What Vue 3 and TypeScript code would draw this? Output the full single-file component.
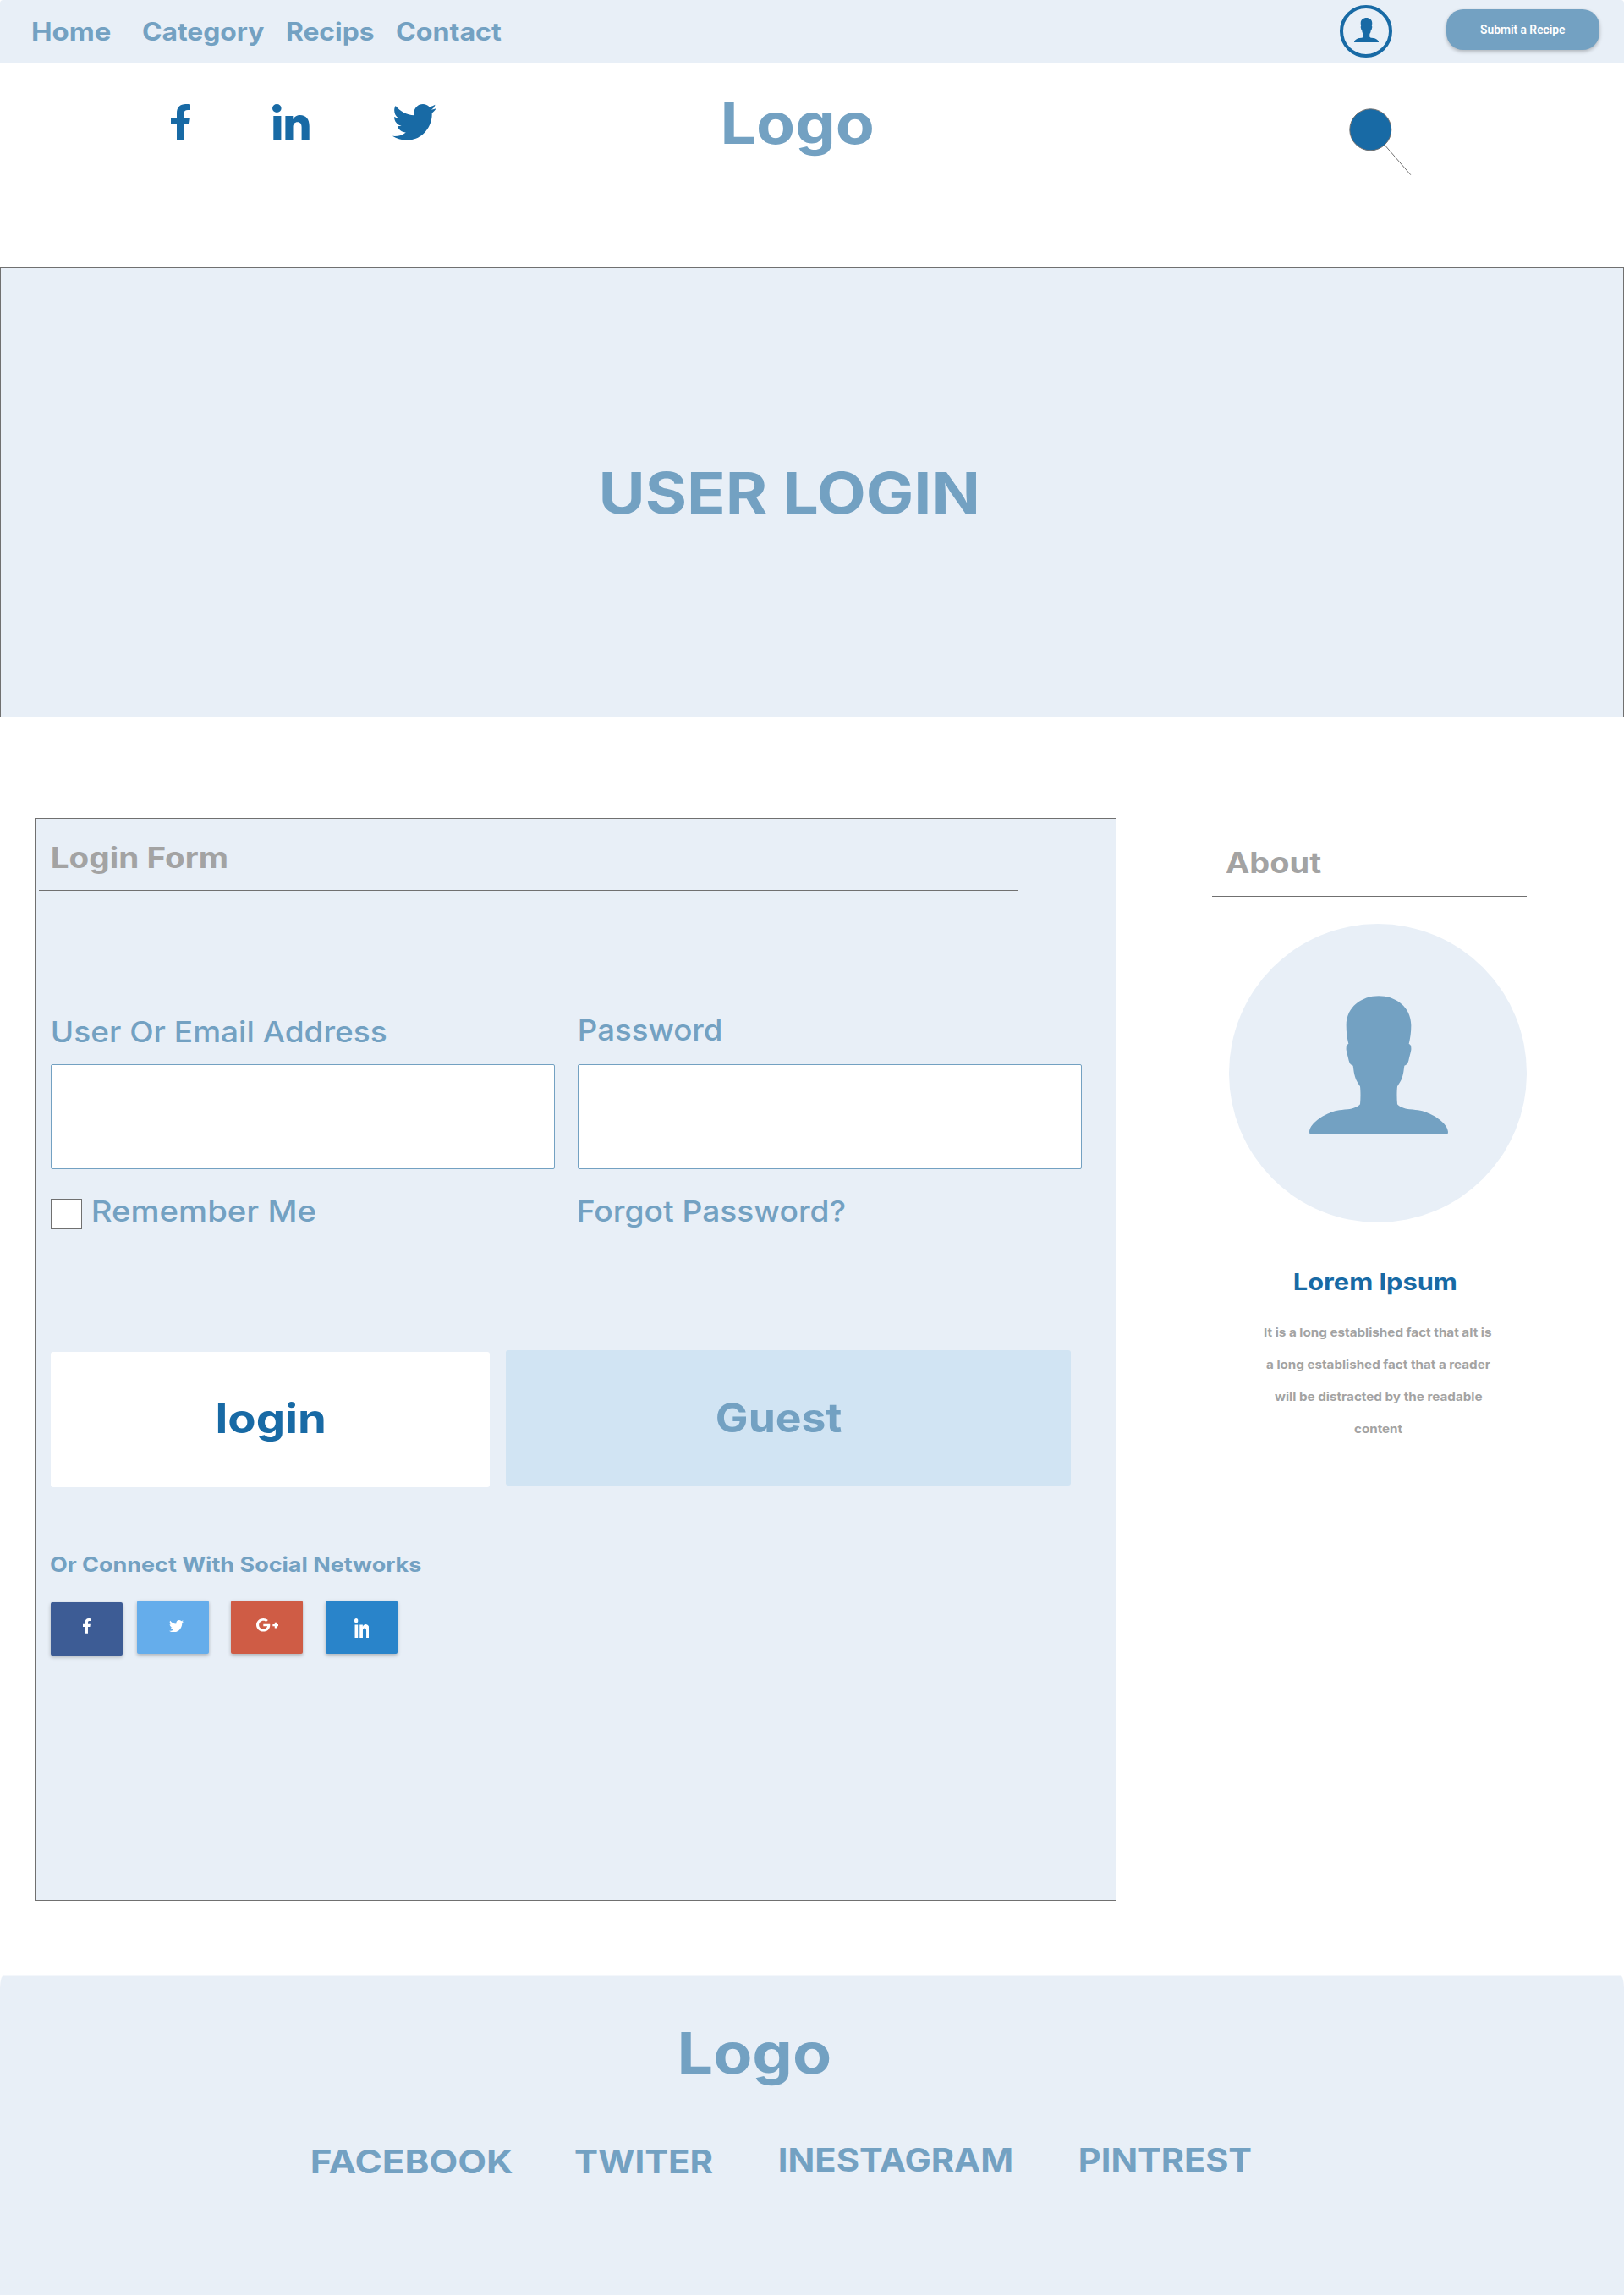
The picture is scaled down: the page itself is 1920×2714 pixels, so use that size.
<script setup lang="ts">
import type { Directive } from 'vue'

interface TextItem {
  label: string
  width: number
}

// Stretches a single line of text so that its visible ink fills the given width.
const vFit: Directive<HTMLElement, number> = {
  mounted(el, { value }) {
    const style = getComputedStyle(el)
    const ctx = document.createElement('canvas').getContext('2d')
    if (!ctx) return
    ctx.font = `${style.fontWeight} ${style.fontSize} ${style.fontFamily}`
    const m = ctx.measureText(el.textContent ?? '')
    const ratio = value / (m.actualBoundingBoxLeft + m.actualBoundingBoxRight)
    el.style.width = `${value}px`
    el.style.transform = `translateX(${m.actualBoundingBoxLeft * ratio}px) scaleX(${ratio})`
  },
}

const nav: TextItem[] = [
  { label: 'Home', width: 92.6 },
  { label: 'Category', width: 143.6 },
  { label: 'Recips', width: 103 },
  { label: 'Contact', width: 124 },
]

const aboutLines: TextItem[] = [
  { label: 'It is a long established fact that aIt is', width: 269.8 },
  { label: 'a long established fact that a reader', width: 265.3 },
  { label: 'will be distracted by the readable', width: 245.3 },
  { label: 'content', width: 57 },
]

const footerLinks: TextItem[] = [
  { label: 'FACEBOOK', width: 236.8 },
  { label: 'TWITER', width: 162.8 },
  { label: 'INESTAGRAM', width: 274 },
  { label: 'PINTREST', width: 202.3 },
]

const facebook =
  'M23.3.4C21.5.1 20 0 17.5 0 11 0 7 4 7 10.5V16.3H0V24H7V42.7H15.5V24H21.8L22.9 16.3H15.5V11.3C15.5 8.5 17 7.1 20 7.1H23.3Z'
const linkedin =
  'M5.3 0a5.3 5 0 1 1 0 10a5.3 5 0 1 1 0-10ZM1.3 14H10.4V42.7H1.3ZM15.4 14H24.3V18C26.3 14.6 29.3 13 32.7 13C40 13 43.7 18 43.7 26V42.7H34.6V27.5C34.6 23.4 33 21.2 29.8 21.2C26.5 21.2 24.5 23.5 24.5 27V42.7H15.4Z'
const twitter =
  'M459.37 151.716c.325 4.548.325 9.097.325 13.645 0 138.72-105.583 298.558-298.558 298.558-59.452 0-114.68-17.219-161.137-47.106 8.447.974 16.568 1.299 25.34 1.299 49.055 0 94.213-16.568 130.274-44.832-46.132-.975-84.792-31.188-98.112-72.772 6.498.974 12.995 1.624 19.818 1.624 9.421 0 18.843-1.3 27.614-3.573-48.081-9.747-84.143-51.98-84.143-102.985v-1.299c13.969 7.797 30.214 12.67 47.431 13.319-28.264-18.843-46.781-51.005-46.781-87.391 0-19.492 5.197-37.36 14.294-52.954 51.655 63.675 129.3 105.258 216.365 109.807-1.624-7.797-2.599-15.918-2.599-24.04 0-57.828 46.782-104.934 104.934-104.934 30.213 0 57.502 12.67 76.67 33.137 23.715-4.548 46.456-13.32 66.599-25.34-7.798 24.366-24.366 44.833-46.132 57.827 21.117-2.273 41.584-8.122 60.426-16.243-14.292 20.791-32.161 39.308-52.628 54.253z'
const googlePlus =
  'M386.061 228.496c1.834 9.692 3.143 19.384 3.143 31.956C389.204 370.205 315.599 448 204.8 448c-106.084 0-192-85.915-192-192s85.916-192 192-192c51.864 0 95.083 18.859 128.611 50.292l-52.126 50.03c-14.145-13.621-39.028-29.599-76.485-29.599-65.484 0-118.92 54.221-118.92 121.277 0 67.056 53.436 121.277 118.92 121.277 75.961 0 104.513-54.745 108.965-82.773H204.8v-66.009h181.261zm185.406 6.437V179.2h-56.001v55.733h-55.733v56.001h55.733v55.733h56.001v-55.733H627.2v-56.001h-55.733z'
const person =
  'M246 1C306 1 361 40 361 105C361 130 358 150 353 171C359 172 362 178 361 192C359 205 355 215 352 230C349 242 344 246 337 248C334 270 333 280 327 296C322 306 316 315 312 322C310 340 310 365 312 385C318 393 336 401 356 403C386 406 404 408 421 416C451 428 491 455 492 484Q492 493 483 493H9Q0 493 0 484C1 455 41 428 71 416C88 408 106 406 136 403C156 401 174 393 180 385C182 365 182 340 180 322C176 315 170 306 165 296C159 280 158 270 155 248C148 246 143 242 140 230C137 215 133 205 131 192C130 178 133 172 139 171C134 150 131 130 131 105C131 40 186 1 246 1Z'
</script>

<template>
  <div class="page">
    <header class="topbar">
      <nav class="nav">
        <a v-for="item in nav" :key="item.label" v-fit="item.width" class="txt nav-link">{{ item.label }}</a>
      </nav>
      <div class="avatar">
        <svg width="29" height="29" viewBox="0 0 492 493" preserveAspectRatio="none"><path :d="person" /></svg>
      </div>
      <button class="submit"><span v-fit="101" class="txt">Submit a Recipe</span></button>
    </header>

    <section class="masthead">
      <div class="socials">
        <svg class="fb" width="23.3" height="42.7" viewBox="0 0 23.3 42.7"><path :d="facebook" /></svg>
        <svg class="li" width="43.8" height="42.7" viewBox="0 0 43.8 42.7"><path :d="linkedin" /></svg>
        <svg class="tw" width="52" height="42.7" viewBox="0 48 512 416" preserveAspectRatio="none"><path :d="twitter" /></svg>
      </div>
      <div v-fit="175.2" class="txt logo">Logo</div>
      <svg class="search" width="74" height="81" viewBox="0 0 74 81">
        <circle cx="25.3" cy="25.3" r="24.5" fill="#186aa5" stroke="#707070" />
        <path d="M41.8 43 72.8 78.7" fill="none" stroke="#707070" />
      </svg>
    </section>

    <section class="hero">
      <h1 v-fit="442" class="txt hero-title">USER LOGIN</h1>
    </section>

    <main class="content">
      <form class="form" @submit.prevent>
        <h2 v-fit="206" class="txt heading">Login Form</h2>
        <div class="form-rule"></div>
        <div class="fields">
          <label class="field">
            <span v-fit="394.5" class="txt label user">User Or Email Address</span>
            <input type="text" class="input" />
          </label>
          <label class="field">
            <span v-fit="167.5" class="txt label pass">Password</span>
            <input type="password" class="input" />
          </label>
        </div>
        <div class="options">
          <label class="remember">
            <input type="checkbox" class="check" />
            <span v-fit="263" class="txt label">Remember Me</span>
          </label>
          <a v-fit="315.3" class="txt label">Forgot Password?</a>
        </div>
        <div class="actions">
          <button class="btn login"><span v-fit="124.6" class="txt">login</span></button>
          <button class="btn guest"><span v-fit="146.8" class="txt">Guest</span></button>
        </div>
        <p v-fit="437.8" class="txt connect">Or Connect With Social Networks</p>
        <div class="networks">
          <a class="net net-fb">
            <svg width="9" height="17.7" viewBox="0 0 23.3 42.7" preserveAspectRatio="none"><path :d="facebook" /></svg>
          </a>
          <a class="net net-tw">
            <svg width="17" height="14.4" viewBox="0 48 512 416" preserveAspectRatio="none"><path :d="twitter" /></svg>
          </a>
          <a class="net net-gp">
            <svg width="26.6" height="15.6" viewBox="12.8 64 614.4 384" preserveAspectRatio="none"><path :d="googlePlus" /></svg>
          </a>
          <a class="net net-li">
            <svg width="17.8" height="23" viewBox="0 0 43.8 42.7" preserveAspectRatio="none"><path :d="linkedin" /></svg>
          </a>
        </div>
      </form>

      <aside class="about">
        <h2 v-fit="112.7" class="txt heading">About</h2>
        <div class="about-rule"></div>
        <div class="portrait">
          <svg width="164" height="164.3" viewBox="0 0 492 493" preserveAspectRatio="none"><path :d="person" /></svg>
        </div>
        <h3 v-fit="191" class="txt name">Lorem Ipsum</h3>
        <div class="bio">
          <div v-for="line in aboutLines" :key="line.label" v-fit="line.width" class="txt bio-line">{{ line.label }}</div>
        </div>
      </aside>
    </main>

    <footer class="footer">
      <div v-fit="175.6" class="txt logo">Logo</div>
      <div class="footer-links">
        <a v-for="link in footerLinks" :key="link.label" v-fit="link.width" class="txt footer-link">{{ link.label }}</a>
      </div>
    </footer>
  </div>
</template>

<style>
body {
  margin: 0;
  background: #fff;
}
</style>

<style scoped>
.page {
  width: 1920px;
  height: 2714px;
  display: flex;
  flex-direction: column;
  background: #fff;
  color: #73a1c2;
  font-family: Inter, 'Noto Sans', sans-serif;
  overflow: hidden;
}
.page *,
.page {
  box-sizing: border-box;
}
svg {
  display: block;
  flex: none;
  fill: currentColor;
}
.txt {
  display: block;
  flex: none;
  margin: 0;
  white-space: nowrap;
  text-align: left;
  transform-origin: 0 50%;
}
button {
  border: 0;
  padding: 0;
  font-family: inherit;
}

.topbar {
  height: 75px;
  flex: none;
  display: flex;
  align-items: flex-start;
  background: #e8eff7;
  border-radius: 4px 4px 0 0;
}
.nav {
  display: flex;
  padding: 22px 0 0 38.2px;
  width: 1584px;
}
.nav-link {
  font-size: 29.5px;
  font-weight: 700;
  line-height: 30px;
}
.nav-link:nth-child(1) {
  margin-right: 37.8px;
}
.nav-link:nth-child(2) {
  margin-right: 26.8px;
}
.nav-link:nth-child(3) {
  margin-right: 26.6px;
}
.avatar {
  width: 62px;
  height: 62px;
  margin-top: 6px;
  border: 4px solid #186aa5;
  border-radius: 50%;
  color: #186aa5;
  display: flex;
  justify-content: center;
  padding-top: 11px;
}
.submit {
  width: 181px;
  height: 48px;
  margin: 11px 0 0 64px;
  padding: 0 0 0 40.3px;
  border-radius: 20px;
  background: #73a1c2;
  color: #fff;
  font: 600 14px/16px Roboto, sans-serif;
  box-shadow: 0 2px 4px rgba(0, 0, 0, 0.25);
}

.masthead {
  height: 241px;
  flex: none;
  display: flex;
  align-items: flex-start;
}
.socials {
  display: flex;
  width: 855.9px;
  padding: 48px 0 0 202px;
  color: #186aa5;
}
.li {
  margin-left: 97.1px;
}
.tw {
  margin-left: 97.8px;
}
.logo {
  font-size: 67.4px;
  font-weight: 700;
  line-height: 68px;
}
.masthead .logo {
  margin-top: 36.5px;
}
.search {
  margin: 53px 0 0 563.9px;
}

.hero {
  height: 532px;
  flex: none;
  border: 1px solid #707070;
  background: #e8eff7;
  padding: 231.5px 0 0 711px;
}
.hero-title {
  font-size: 67.4px;
  font-weight: 700;
  line-height: 68px;
}

.content {
  flex: none;
  display: flex;
  align-items: flex-start;
  height: 1487px;
  padding: 118px 0 0 41px;
}
.form {
  width: 1279px;
  height: 1280px;
  flex: none;
  margin-top: 1px;
  border: 1px solid #707070;
  background: #e8eff7;
  padding: 28.5px 0 0 18px;
}
.heading {
  font-size: 33.7px;
  font-weight: 700;
  line-height: 34px;
  color: #a3a3a3;
}
.form .heading {
  margin-left: 2.3px;
}
.form-rule {
  width: 1157px;
  margin: 21.5px 0 0 -14px;
  border-top: 1px solid #707070;
}
.fields {
  display: flex;
  align-items: flex-end;
  gap: 27px;
  margin-top: 147.75px;
}
.field {
  width: 596px;
  flex: none;
}
.label {
  font-size: 33.7px;
  font-weight: 450;
  line-height: 34px;
}
.user {
  margin: 0 0 21.25px 2.3px;
}
.pass {
  margin: 0 0 23.25px 2.3px;
}
.input {
  display: block;
  width: 596px;
  height: 124px;
  margin: 0;
  border: 1px solid #73a1c2;
  border-radius: 2px;
  background: #fff;
}
.options {
  display: flex;
  height: 38.5px;
  margin-top: 32.5px;
}
.remember {
  display: flex;
  width: 623.7px;
}
.check {
  appearance: none;
  width: 37px;
  height: 36px;
  margin: 2.5px 13.4px 0 0;
  border: 1px solid #707070;
  background: #fff;
}
.actions {
  display: flex;
  align-items: flex-start;
  gap: 19px;
  margin-top: 143px;
}
.btn {
  height: 160px;
  border-radius: 3px;
  font-size: 48.1px;
  font-weight: 700;
  line-height: 48px;
}
.login {
  width: 519px;
  margin-top: 2px;
  padding: 0 0 2px 197.8px;
  background: #fff;
  color: #186aa5;
}
.guest {
  width: 668px;
  padding: 0 0 1px 249.5px;
  background: #d1e4f3;
  color: #73a1c2;
}
.connect {
  margin-top: 80px;
  font-size: 24px;
  font-weight: 700;
  line-height: 24px;
}
.networks {
  display: flex;
  align-items: flex-start;
  margin-top: 30px;
}
.net {
  width: 85px;
  height: 63px;
  border-radius: 2px;
  color: #fff;
  box-shadow: 0 2px 4px rgba(0, 0, 0, 0.25);
}
.net-fb {
  margin-top: 2px;
  padding: 19px 0 0 38px;
  background: #3d5c95;
}
.net-tw {
  margin-left: 17px;
  padding: 22.6px 0 0 37.6px;
  background: #65adeb;
}
.net-gp {
  margin-left: 26px;
  padding: 21px 0 0 29.5px;
  background: #cf5c45;
}
.net-li {
  margin-left: 27px;
  padding: 21px 0 0 33.7px;
  background: #2984ca;
}

.about {
  width: 372px;
  margin-left: 113px;
  padding-top: 37px;
}
.about .heading {
  margin-left: 16.3px;
}
.about-rule {
  margin-top: 22px;
  border-top: 1px solid #707070;
}
.portrait {
  width: 352px;
  height: 353px;
  margin: 32px 0 0 20px;
  border-radius: 50%;
  background: #e8eff7;
  padding: 84.7px 0 0 95px;
}
.name {
  margin: 57px 0 0 97px;
  font-size: 27px;
  font-weight: 700;
  line-height: 28px;
  color: #186aa5;
}
.bio {
  display: flex;
  flex-direction: column;
  align-items: center;
  width: 269.3px;
  margin: 26px 0 0 61.6px;
}
.bio-line {
  font-size: 13.8px;
  font-weight: 700;
  line-height: 38px;
  color: #a3a3a3;
}

.footer {
  flex: none;
  height: 378px;
  background: #e8eff7;
  border-top: 1px solid #f4f7fb;
  border-radius: 4px 4px 0 0 / 15px 15px 0 0;
  padding: 56.5px 0 0 369.2px;
}
.footer .logo {
  margin-left: 435.9px;
}
.footer-links {
  display: flex;
  margin-top: 72px;
}
.footer-link {
  font-size: 38.5px;
  font-weight: 700;
  line-height: 40px;
}
.footer-link:nth-child(1) {
  margin: 2px 74.2px 0 0;
}
.footer-link:nth-child(2) {
  margin: 2px 79px 0 0;
}
.footer-link:nth-child(3) {
  margin-right: 81.4px;
}
</style>
